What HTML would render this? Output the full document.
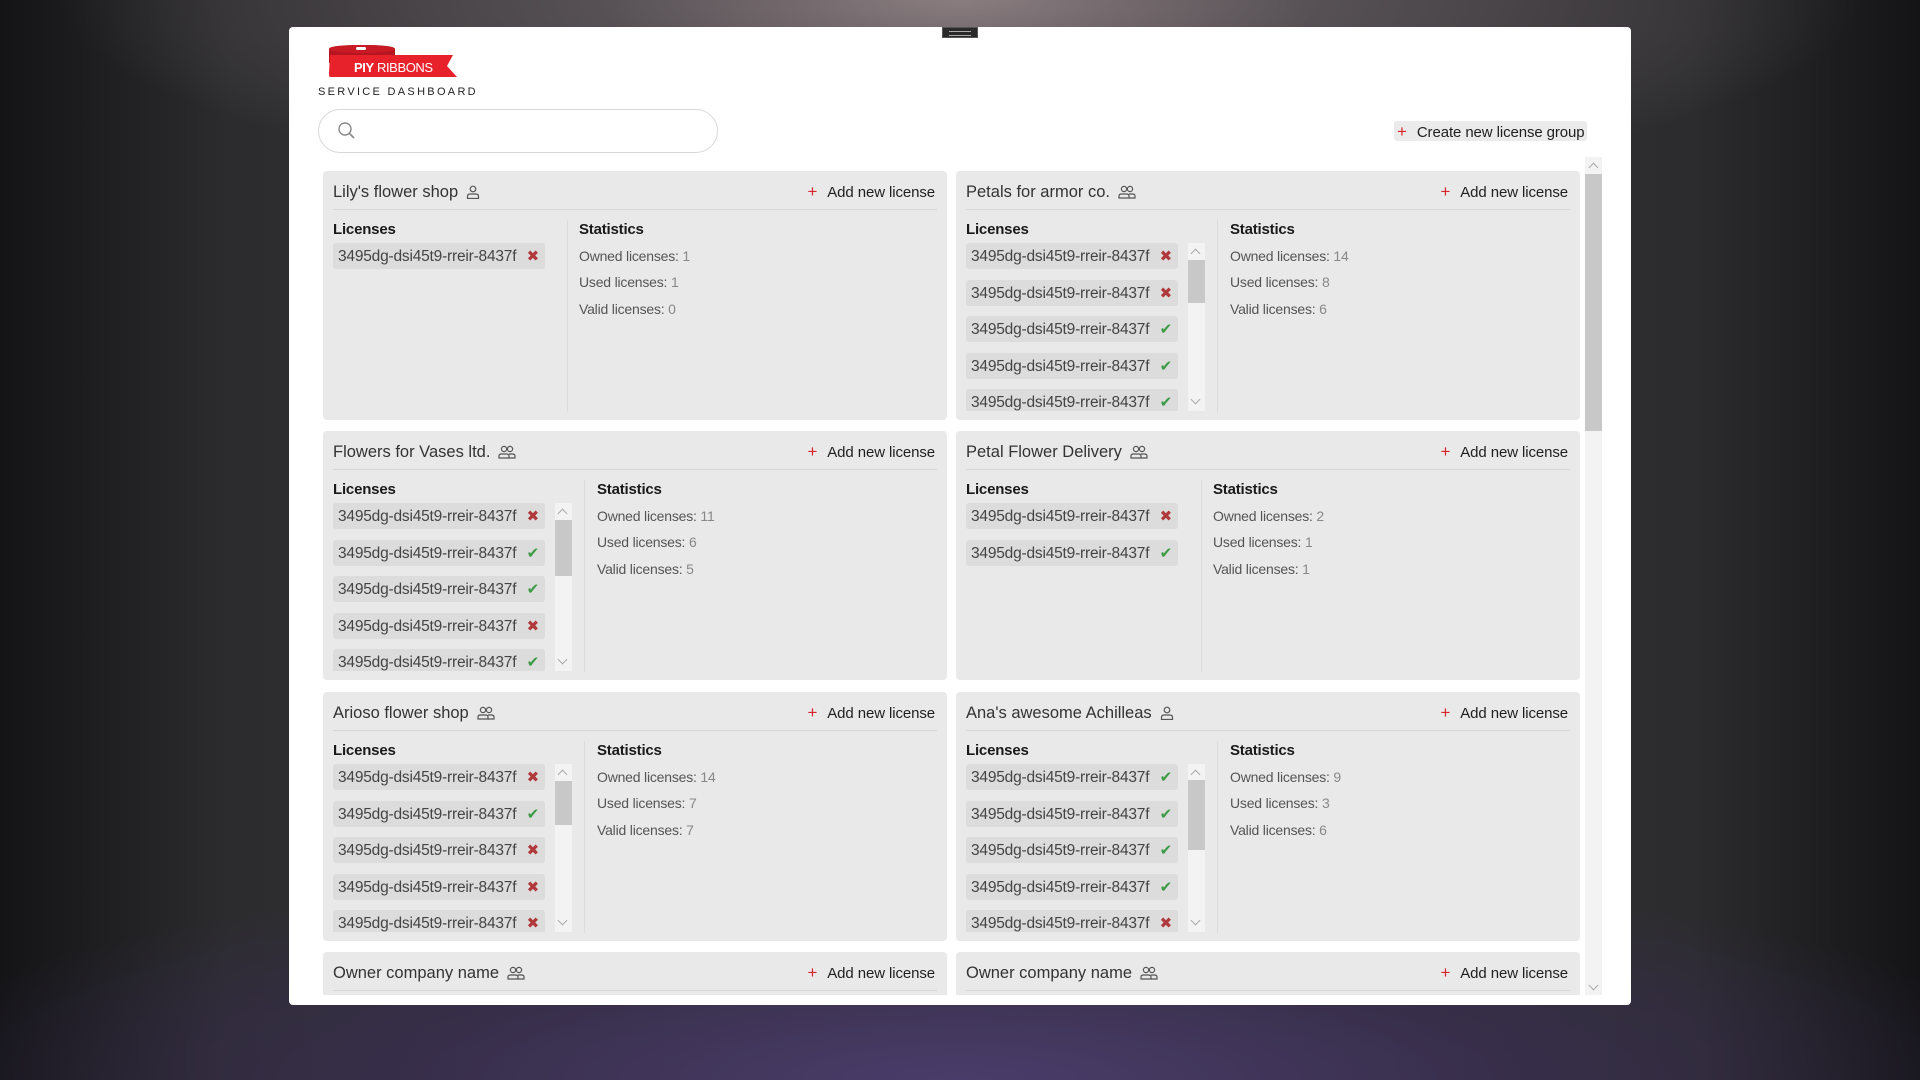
<!DOCTYPE html>
<html style="overflow:hidden"><head><meta charset="utf-8">
<style>
*{margin:0;padding:0;box-sizing:border-box}
body{width:1920px;height:1080px;overflow:hidden;font-family:"Liberation Sans",sans-serif;position:relative;
background:radial-gradient(ellipse 900px 200px at 50% 0%,#8a7d80 0%,rgba(110,100,105,0.6) 40%,rgba(0,0,0,0) 100%),
radial-gradient(ellipse 1100px 220px at 50% 100%,#4a3c6a 0%,rgba(60,45,90,0.6) 50%,rgba(0,0,0,0) 100%),
linear-gradient(90deg,#141416 0%,#2c2c2e 12%,#3a3a3c 50%,#2c2c2e 88%,#141416 100%);}
.modal{position:absolute;left:289px;top:27px;width:1342px;height:978px;background:#fff;border-radius:4px;overflow:hidden}
.handle{position:absolute;left:942px;top:27px;width:36px;height:11px;background:#2a2a2a;border:1px solid #555}
.handle:after{content:"";position:absolute;left:6px;right:6px;top:3px;height:3px;border-top:1px solid #aaa;border-bottom:1px solid #aaa}
.abs{position:absolute}
.card{position:absolute;width:624px;height:249px;background:#e9e9e9;border-radius:4px;overflow:hidden}
.hd{position:absolute;left:10px;top:11px;font-size:16.5px;color:#333;line-height:20px;white-space:nowrap}
.hd svg{vertical-align:-2px;margin-left:8px}
.add{position:absolute;right:12px;top:11px;font-size:15px;color:#1f1f1f;line-height:20px;white-space:nowrap;letter-spacing:-0.1px}
.add b,.cr b{color:#d8262c;font-weight:normal;margin-right:10px;font-size:17px}
.ln{position:absolute;left:10px;right:10px;top:38px;height:1px;background:#d7d7d7}
.lt{position:absolute;left:10px;top:50px;font-size:15px;font-weight:bold;color:#1a1a1a;letter-spacing:-0.2px}
.st{position:absolute;top:50px;font-size:15px;font-weight:bold;color:#1a1a1a;letter-spacing:-0.2px}
.sv{position:absolute;font-size:14px;color:#555;letter-spacing:-0.2px;white-space:nowrap}
.sv span{color:#888}
.dv{position:absolute;top:49px;width:1px;height:192px;background:#dcdcdc}
.list{position:absolute;left:10px;top:72px;width:212px;height:168px;overflow:hidden}
.chip{height:26px;margin-bottom:10.5px;background:#dcdcdc;border-radius:3px;font-size:15.5px;color:#444;line-height:27px;padding-left:5px;letter-spacing:-0.2px;position:relative;white-space:nowrap}
.chip i{position:absolute;right:6px;top:0;font-style:normal;font-size:15px;font-family:"DejaVu Sans",sans-serif}
.x{color:#b0393b}.v{color:#3d9b45}
.sb{position:absolute;left:232px;top:72px;width:17px;height:168px;background:#f3f3f3}
.sb .t{position:absolute;left:0;right:0;background:#c8c8c8}
.sb .u,.sb .d{position:absolute;left:4px;width:7px;height:7px;border-left:1px solid #aaa;border-top:1px solid #aaa}
.sb .u{top:7px;transform:rotate(45deg)}
.sb .d{bottom:8px;transform:rotate(225deg)}
</style></head><body>
<div class="modal"></div>
<div class="handle"></div>

<svg class="abs" style="left:326px;top:43px" width="134" height="38" viewBox="0 0 134 38">
<path d="M3 6 Q3 2 36 2 Q69 2 69 6 L69 20 L3 20 Z" fill="#b5161f"/>
<ellipse cx="36" cy="6" rx="33" ry="4" fill="#c81a24"/>
<rect x="30" y="4" width="10" height="3" rx="1.5" fill="#fff"/>
<path d="M4 12 L127 12 L121 23 L131 34 L4 34 Q3 34 3 30 Z" fill="#e8222b"/>
<text x="28" y="29" font-family="Liberation Sans" font-size="13" fill="#fff" letter-spacing="-0.4"><tspan font-weight="bold">PIY</tspan> RIBBONS</text>
</svg>
<div class="abs" style="left:318px;top:86px;font-size:11px;letter-spacing:2.3px;color:#222">SERVICE DASHBOARD</div>

<div class="abs" style="left:318px;top:109px;width:400px;height:44px;border:1px solid #d8d8d8;border-radius:22px;background:#fff"></div>
<svg class="abs" style="left:337px;top:121px" width="20" height="20" viewBox="0 0 20 20"><circle cx="8" cy="8" r="6" fill="none" stroke="#888" stroke-width="1.4"/><path d="M12.5 12.5 L17 17" stroke="#888" stroke-width="1.6"/></svg>

<div class="abs cr" style="left:1394px;top:121px;width:193px;height:20px;background:#ebebeb;border-radius:3px;font-size:15px;line-height:21px;color:#1f1f1f;padding-left:3px;white-space:nowrap;letter-spacing:-0.1px"><b>+</b>Create new license group</div>

<div class="abs" style="left:1585px;top:157px;width:17px;height:838px;background:#f3f3f3"></div>
<div class="abs" style="left:1585px;top:174px;width:17px;height:257px;background:#c8c8c8"></div>
<div class="abs" style="left:1590px;top:164px;width:7px;height:7px;border-left:1px solid #aaa;border-top:1px solid #aaa;transform:rotate(45deg)"></div>
<div class="abs" style="left:1590px;top:982px;width:7px;height:7px;border-left:1px solid #aaa;border-top:1px solid #aaa;transform:rotate(225deg)"></div>

<div class="abs" style="left:300px;top:157px;width:1284px;height:838px;overflow:hidden">
<div style="position:absolute;left:-300px;top:-157px;width:1920px;height:1080px">

<div class="card" style="left:323px;top:171px">
<div class="hd">Lily's flower shop<svg width="14" height="14" viewBox="0 0 14 14" fill="none" stroke="#555" stroke-width="1.2"><circle cx="7" cy="4" r="2.8"/><path d="M1.5 13.5 V11.5 Q1.5 9 4 9 H10 Q12.5 9 12.5 11.5 V13.5 Z"/></svg></div>
<div class="add"><b>+</b>Add new license</div><div class="ln"></div>
<div class="lt">Licenses</div>
<div class="list"><div class="chip">3495dg-dsi45t9-rreir-8437f<i class="x">✖</i></div></div>
<div class="dv" style="left:244px"></div>
<div class="st" style="left:256px">Statistics</div>
<div class="sv" style="left:256px;top:77px">Owned licenses: <span>1</span></div>
<div class="sv" style="left:256px;top:103px">Used licenses: <span>1</span></div>
<div class="sv" style="left:256px;top:130px">Valid licenses: <span>0</span></div>
</div>

<div class="card" style="left:956px;top:171px">
<div class="hd">Petals for armor co.<svg width="18" height="14" viewBox="0 0 18 14" fill="none" stroke="#555" stroke-width="1.2"><circle cx="6" cy="4" r="2.6"/><circle cx="12" cy="4" r="2.6"/><path d="M1 13 V11 Q1 9 3.5 9 H8.5 Q11 9 11 11 V13 Z"/><path d="M11 9 H14.5 Q17 9 17 11 V13 H11"/></svg></div>
<div class="add"><b>+</b>Add new license</div><div class="ln"></div>
<div class="lt">Licenses</div>
<div class="list">
<div class="chip">3495dg-dsi45t9-rreir-8437f<i class="x">✖</i></div>
<div class="chip">3495dg-dsi45t9-rreir-8437f<i class="x">✖</i></div>
<div class="chip">3495dg-dsi45t9-rreir-8437f<i class="v">✔</i></div>
<div class="chip">3495dg-dsi45t9-rreir-8437f<i class="v">✔</i></div>
<div class="chip">3495dg-dsi45t9-rreir-8437f<i class="v">✔</i></div></div>
<div class="sb"><div class="t" style="top:17px;height:43px"></div><div class="u"></div><div class="d"></div></div>
<div class="dv" style="left:261px"></div>
<div class="st" style="left:274px">Statistics</div>
<div class="sv" style="left:274px;top:77px">Owned licenses: <span>14</span></div>
<div class="sv" style="left:274px;top:103px">Used licenses: <span>8</span></div>
<div class="sv" style="left:274px;top:130px">Valid licenses: <span>6</span></div>
</div>

<div class="card" style="left:323px;top:431px">
<div class="hd">Flowers for Vases ltd.<svg width="18" height="14" viewBox="0 0 18 14" fill="none" stroke="#555" stroke-width="1.2"><circle cx="6" cy="4" r="2.6"/><circle cx="12" cy="4" r="2.6"/><path d="M1 13 V11 Q1 9 3.5 9 H8.5 Q11 9 11 11 V13 Z"/><path d="M11 9 H14.5 Q17 9 17 11 V13 H11"/></svg></div>
<div class="add"><b>+</b>Add new license</div><div class="ln"></div>
<div class="lt">Licenses</div>
<div class="list">
<div class="chip">3495dg-dsi45t9-rreir-8437f<i class="x">✖</i></div>
<div class="chip">3495dg-dsi45t9-rreir-8437f<i class="v">✔</i></div>
<div class="chip">3495dg-dsi45t9-rreir-8437f<i class="v">✔</i></div>
<div class="chip">3495dg-dsi45t9-rreir-8437f<i class="x">✖</i></div>
<div class="chip">3495dg-dsi45t9-rreir-8437f<i class="v">✔</i></div></div>
<div class="sb"><div class="t" style="top:17px;height:56px"></div><div class="u"></div><div class="d"></div></div>
<div class="dv" style="left:261px"></div>
<div class="st" style="left:274px">Statistics</div>
<div class="sv" style="left:274px;top:77px">Owned licenses: <span>11</span></div>
<div class="sv" style="left:274px;top:103px">Used licenses: <span>6</span></div>
<div class="sv" style="left:274px;top:130px">Valid licenses: <span>5</span></div>
</div>

<div class="card" style="left:956px;top:431px">
<div class="hd">Petal Flower Delivery<svg width="18" height="14" viewBox="0 0 18 14" fill="none" stroke="#555" stroke-width="1.2"><circle cx="6" cy="4" r="2.6"/><circle cx="12" cy="4" r="2.6"/><path d="M1 13 V11 Q1 9 3.5 9 H8.5 Q11 9 11 11 V13 Z"/><path d="M11 9 H14.5 Q17 9 17 11 V13 H11"/></svg></div>
<div class="add"><b>+</b>Add new license</div><div class="ln"></div>
<div class="lt">Licenses</div>
<div class="list">
<div class="chip">3495dg-dsi45t9-rreir-8437f<i class="x">✖</i></div>
<div class="chip">3495dg-dsi45t9-rreir-8437f<i class="v">✔</i></div></div>
<div class="dv" style="left:245px"></div>
<div class="st" style="left:257px">Statistics</div>
<div class="sv" style="left:257px;top:77px">Owned licenses: <span>2</span></div>
<div class="sv" style="left:257px;top:103px">Used licenses: <span>1</span></div>
<div class="sv" style="left:257px;top:130px">Valid licenses: <span>1</span></div>
</div>

<div class="card" style="left:323px;top:692px">
<div class="hd">Arioso flower shop<svg width="18" height="14" viewBox="0 0 18 14" fill="none" stroke="#555" stroke-width="1.2"><circle cx="6" cy="4" r="2.6"/><circle cx="12" cy="4" r="2.6"/><path d="M1 13 V11 Q1 9 3.5 9 H8.5 Q11 9 11 11 V13 Z"/><path d="M11 9 H14.5 Q17 9 17 11 V13 H11"/></svg></div>
<div class="add"><b>+</b>Add new license</div><div class="ln"></div>
<div class="lt">Licenses</div>
<div class="list">
<div class="chip">3495dg-dsi45t9-rreir-8437f<i class="x">✖</i></div>
<div class="chip">3495dg-dsi45t9-rreir-8437f<i class="v">✔</i></div>
<div class="chip">3495dg-dsi45t9-rreir-8437f<i class="x">✖</i></div>
<div class="chip">3495dg-dsi45t9-rreir-8437f<i class="x">✖</i></div>
<div class="chip">3495dg-dsi45t9-rreir-8437f<i class="x">✖</i></div></div>
<div class="sb"><div class="t" style="top:17px;height:44px"></div><div class="u"></div><div class="d"></div></div>
<div class="dv" style="left:261px"></div>
<div class="st" style="left:274px">Statistics</div>
<div class="sv" style="left:274px;top:77px">Owned licenses: <span>14</span></div>
<div class="sv" style="left:274px;top:103px">Used licenses: <span>7</span></div>
<div class="sv" style="left:274px;top:130px">Valid licenses: <span>7</span></div>
</div>

<div class="card" style="left:956px;top:692px">
<div class="hd">Ana's awesome Achilleas<svg width="14" height="14" viewBox="0 0 14 14" fill="none" stroke="#555" stroke-width="1.2"><circle cx="7" cy="4" r="2.8"/><path d="M1.5 13.5 V11.5 Q1.5 9 4 9 H10 Q12.5 9 12.5 11.5 V13.5 Z"/></svg></div>
<div class="add"><b>+</b>Add new license</div><div class="ln"></div>
<div class="lt">Licenses</div>
<div class="list">
<div class="chip">3495dg-dsi45t9-rreir-8437f<i class="v">✔</i></div>
<div class="chip">3495dg-dsi45t9-rreir-8437f<i class="v">✔</i></div>
<div class="chip">3495dg-dsi45t9-rreir-8437f<i class="v">✔</i></div>
<div class="chip">3495dg-dsi45t9-rreir-8437f<i class="v">✔</i></div>
<div class="chip">3495dg-dsi45t9-rreir-8437f<i class="x">✖</i></div></div>
<div class="sb"><div class="t" style="top:16px;height:70px"></div><div class="u"></div><div class="d"></div></div>
<div class="dv" style="left:261px"></div>
<div class="st" style="left:274px">Statistics</div>
<div class="sv" style="left:274px;top:77px">Owned licenses: <span>9</span></div>
<div class="sv" style="left:274px;top:103px">Used licenses: <span>3</span></div>
<div class="sv" style="left:274px;top:130px">Valid licenses: <span>6</span></div>
</div>

<div class="card" style="left:323px;top:952px">
<div class="hd">Owner company name<svg width="18" height="14" viewBox="0 0 18 14" fill="none" stroke="#555" stroke-width="1.2"><circle cx="6" cy="4" r="2.6"/><circle cx="12" cy="4" r="2.6"/><path d="M1 13 V11 Q1 9 3.5 9 H8.5 Q11 9 11 11 V13 Z"/><path d="M11 9 H14.5 Q17 9 17 11 V13 H11"/></svg></div>
<div class="add"><b>+</b>Add new license</div><div class="ln"></div>
</div>
<div class="card" style="left:956px;top:952px">
<div class="hd">Owner company name<svg width="18" height="14" viewBox="0 0 18 14" fill="none" stroke="#555" stroke-width="1.2"><circle cx="6" cy="4" r="2.6"/><circle cx="12" cy="4" r="2.6"/><path d="M1 13 V11 Q1 9 3.5 9 H8.5 Q11 9 11 11 V13 Z"/><path d="M11 9 H14.5 Q17 9 17 11 V13 H11"/></svg></div>
<div class="add"><b>+</b>Add new license</div><div class="ln"></div>
</div>

</div></div>
</body></html>
